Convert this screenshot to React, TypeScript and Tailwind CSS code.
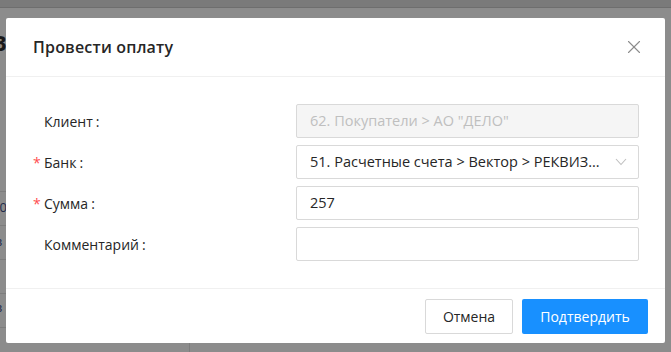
import { X } from "lucide-react"

const rowLines = [191, 225, 259, 293, 327]

function Label({ text, required }: { text: string; required?: boolean }) {
  return (
    <div className="flex items-center w-[263px] shrink-0 text-[14px] text-[#262626]">
      <span className="w-[11px] text-[#ff4d4f] text-[14px] leading-none pt-[2px]">{required ? "*" : ""}</span>
      <span>{text}</span>
      <span className="ml-[3px]">:</span>
    </div>
  )
}

export default function App() {
  return (
    <div
      className="relative w-[671px] h-[352px] overflow-hidden bg-[#8c8c8c]"
      style={{ fontFamily: '"Open Sans", "Noto Sans", sans-serif' }}
    >
      {/* page behind the mask */}
      <div className="h-[8px] bg-[#7a7a7a] border-b border-[#6e6e6e]" />
      <div className="absolute left-[-8px] top-[26px] text-[22px] font-bold text-[#1a1a1a]">В</div>
      {rowLines.map((y) => (
        <div key={y} className="absolute left-0 w-[200px] h-px bg-[#7d7d7d]" style={{ top: y }} />
      ))}
      <div className="absolute left-[-4px] top-[198px] text-[13px] text-[#1f2a4a]">.0</div>
      <div className="absolute left-[-4px] top-[232px] text-[13px] text-[#1f2a4a]">з</div>
      <div className="absolute left-[-4px] top-[298px] text-[13px] text-[#1f2a4a]">з</div>
      <div className="absolute left-[189px] top-[330px] w-px h-[30px] bg-[#7d7d7d]" />

      {/* modal */}
      <div className="absolute left-[6px] top-[18px] w-[659px] h-[325px] bg-white rounded-[2px] flex flex-col">
        <div className="h-[59px] shrink-0 flex items-center justify-between pl-[27px] pr-[20px] border-b border-[#f0f0f0]">
          <h2 className="text-[16px] font-semibold text-[#262626] tracking-[0.2px]">Провести оплату</h2>
          <X className="w-[22px] h-[22px] text-[#8c8c8c]" strokeWidth={1.2} />
        </div>

        <div className="flex-1 flex flex-col gap-[7px] pt-[27px] pl-[27px]">
          <div className="flex items-center h-[34px]">
            <Label text="Клиент" />
            <div className="w-[343px] h-[34px] flex items-center px-[13px] bg-[#f5f5f5] border border-[#d9d9d9] rounded-[2px] text-[14.5px] text-[#bfbfbf]">
              62. Покупатели &gt; АО "ДЕЛО"
            </div>
          </div>
          <div className="flex items-center h-[34px]">
            <Label text="Банк" required />
            <div className="w-[343px] h-[34px] flex items-center justify-between pl-[13px] pr-[11px] bg-white border border-[#d9d9d9] rounded-[2px] text-[14.5px] text-[#262626]">
              <span className="truncate">51. Расчетные счета &gt; Вектор &gt; РЕКВИЗ...</span>
              <svg width="12" height="8" viewBox="0 0 12 8" className="shrink-0 ml-[10px]">
                <polyline points="1,1 6,6.5 11,1" fill="none" stroke="#bfbfbf" strokeWidth="1.1" />
              </svg>
            </div>
          </div>
          <div className="flex items-center h-[34px]">
            <Label text="Сумма" required />
            <div className="w-[343px] h-[34px] flex items-center px-[13px] bg-white border border-[#d9d9d9] rounded-[2px] text-[14.5px] text-[#262626]">
              257
            </div>
          </div>
          <div className="flex items-center h-[34px]">
            <Label text="Комментарий" />
            <div className="w-[343px] h-[34px] bg-white border border-[#d9d9d9] rounded-[2px]" />
          </div>
        </div>

        <div className="h-[55px] shrink-0 flex items-center justify-end gap-[9px] pr-[17px] border-t border-[#f0f0f0]">
          <button className="w-[88px] h-[35px] border border-[#d9d9d9] rounded-[2px] bg-white text-[14px] text-[#262626]">
            Отмена
          </button>
          <button className="w-[126px] h-[35px] rounded-[2px] bg-[#1890ff] text-[14px] text-white">
            Подтвердить
          </button>
        </div>
      </div>
    </div>
  )
}
